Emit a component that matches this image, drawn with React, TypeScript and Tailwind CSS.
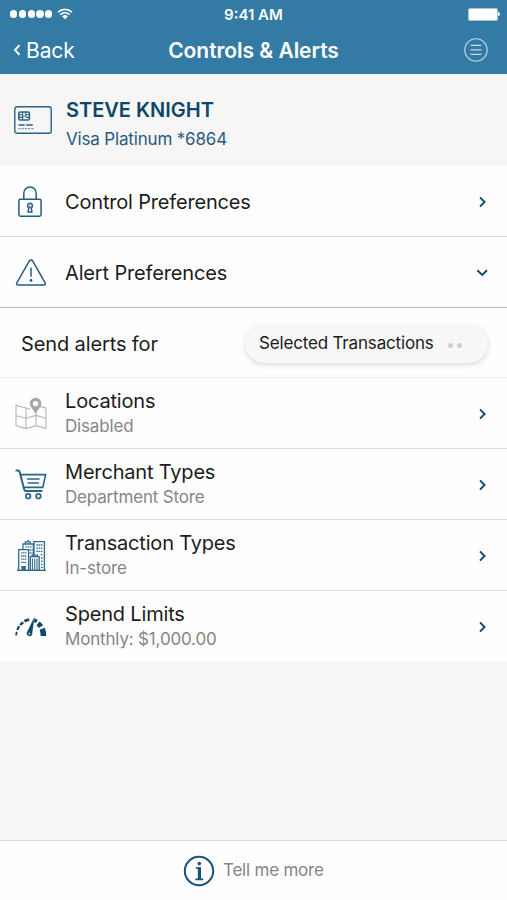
import type { ReactNode } from "react";

type Row = {
  title: string;
  subtitle: string;
  icon: ReactNode;
};

function WifiIcon() {
  return (
    <svg width="16" height="12" viewBox="0 0 16 12" fill="none" stroke="#fff">
      <path d="M1 4.2a10 10 0 0 1 14 0" strokeWidth="1.6" />
      <path d="M3.4 6.6a6.5 6.5 0 0 1 9.2 0" strokeWidth="1.5" />
      <path d="M8 11.2 5.2 8.4a4 4 0 0 1 5.6 0Z" fill="#fff" stroke="none" />
    </svg>
  );
}

function MenuIcon() {
  return (
    <svg width="24" height="24" viewBox="0 0 24 24" fill="none" stroke="#c4dcea">
      <circle cx="12" cy="12" r="11.2" strokeWidth="1.1" />
      <path d="M6.5 7.3h11M6.5 11.8h11M6.5 16.3h11" strokeWidth="1.2" />
    </svg>
  );
}

function CardIcon() {
  return (
    <svg width="38" height="28" viewBox="0 0 38 28" fill="none" stroke="#2b6284">
      <rect x="0.8" y="0.8" width="36.4" height="26.4" rx="2.2" strokeWidth="1.4" />
      <rect x="4.8" y="6" width="10.6" height="8" rx="1.5" strokeWidth="1.6" />
      <path d="M4.8 8.8h3.5M4.8 11.4h3.5M12 8.8h3.3M12 11.4h3.3M8.6 6v8M8.6 10.2h3.2M11.8 6v4.2" strokeWidth="1.1" />
      <path d="M4.5 19h6.2M12.2 19h6.6" strokeWidth="1.5" />
      <path d="M4.5 22.6h15" strokeWidth="1.3" strokeDasharray="2 1.2" opacity=".7" />
    </svg>
  );
}

function LockIcon() {
  return (
    <svg width="24" height="32" viewBox="0 0 24 32" fill="none" stroke="#225c80" strokeWidth="1.5">
      <rect x="0.9" y="13.2" width="22.2" height="17" rx="1.6" />
      <path d="M5.8 13V7.2a6.2 6.2 0 0 1 12.4 0V13" />
      <path d="M12 17.2a2.5 2.5 0 0 1 1.3 4.6l.6 4.2h-3.8l.6-4.2a2.5 2.5 0 0 1 1.3-4.6Z" />
      <path d="M12 19.5v3" strokeWidth="1.2" />
    </svg>
  );
}

function WarningIcon() {
  return (
    <svg width="32" height="28" viewBox="0 0 32 28" fill="none" stroke="#225c80">
      <path
        d="M14.4 2a1.8 1.8 0 0 1 3.2 0l12.6 21.8a1.5 1.5 0 0 1-1.3 2.3H3.1a1.5 1.5 0 0 1-1.3-2.3Z"
        strokeWidth="1.5"
      />
      <path d="M16 8.6v9.2" strokeWidth="1.5" />
      <circle cx="16" cy="21.4" r="1.4" fill="#225c80" stroke="none" />
    </svg>
  );
}

function MapIcon() {
  return (
    <svg width="32" height="33" viewBox="0 0 32 33" fill="none" stroke="#b5b5b5" strokeWidth="1.1">
      <path d="M15.5 12.2 11 11 1 8.2v20.4l10 3 10-3 10 3V11.2l-6-1.8M11 11v20.6M21 16v12.6" />
      <path d="M1 18.8l10 2.4 10-2.8 10 2.8" />
      <path
        d="M20.6 1.4a5.2 5.2 0 0 1 5.2 5.2c0 3.2-3.4 5.2-5.2 9-1.8-3.8-5.2-5.8-5.2-9a5.2 5.2 0 0 1 5.2-5.2Z"
        fill="#a9a9a9"
        stroke="#a2a2a2"
        strokeWidth="1.2"
      />
      <circle cx="20.6" cy="6.6" r="2.7" fill="#fefefe" stroke="none" />
    </svg>
  );
}

function CartIcon() {
  return (
    <svg width="32" height="31" viewBox="0 0 32 31" fill="none" stroke="#286588">
      <path d="M0.6 1.6h2.5c1 0 1.4.6 1.7 1.6l4.4 17.3c.3 1.2.7 1.6 1.8 1.6h16.4" strokeWidth="2" />
      <path d="M6 5.6h24.6l-2.8 12.8H9" strokeWidth="1.6" />
      <path d="M12 10h12.6M12.6 14h11.4" strokeWidth="1.6" />
      <circle cx="13.2" cy="27.2" r="2.3" strokeWidth="1.7" />
      <circle cx="23.4" cy="27.2" r="2.3" strokeWidth="1.7" />
    </svg>
  );
}

function BuildingsIcon() {
  return (
    <svg width="29" height="31" viewBox="0 0 29 31" fill="none" stroke="#326b8c" strokeWidth="1.3">
      <path d="M0 30.3h29" strokeWidth="1.4" />
      <path d="M1.7 30V9.7h9.9V30" />
      <path d="M6 9.5V4h10.4v12M8.3 3.8V1.9h5v1.9M11.2 0v2" />
      <path d="M17 15V1.6h10.4V30" />
      <path d="M13.3 30V16.6h8.9V30M15 16.4v-1.2h5.5v1.2" />
      <path d="M4.1 12.8h5.2M4.1 16h5.2M4.1 19.2h5.2M4.1 22.4h5.2" strokeDasharray="1.5 .5" />
      <path
        d="M19.4 5h6.2M19.4 8.2h6.2M19.4 11.4h6.2M23.7 14.6h2M24 18h1.8M24 21.2h1.8M24 24.4h1.8M24 27.4h1.8"
        strokeDasharray="1.6 .6"
      />
      <path d="M8.5 6.8H15M12.5 10h3M12.5 13h3" strokeDasharray="1.4 .6" />
      <path d="M15.4 18.6V30M17.7 18.6V30M20 18.6V30" strokeWidth="1.1" />
      <path d="M5 30v-3.4h3.2V30" fill="#326b8c" />
    </svg>
  );
}

function GaugeIcon() {
  return (
    <svg width="32" height="21" viewBox="0 0 32 21" fill="none" stroke="#0f4868">
      <path d="M1.2 19.6q0-2 .6-3.8" strokeWidth="1.8" />
      <path d="M2.3 14q.7-2 2-3.8" strokeWidth="2.1" />
      <path d="M5.2 9q1.3-1.6 3-2.8" strokeWidth="2.5" />
      <path d="M9.4 5.2q2-1.1 4.8-1.5" strokeWidth="2.8" />
      <path d="M18.6 4.2q1.8.4 3.2 1.3" strokeWidth="3.8" />
      <path d="M23 7.4q1.8 1.4 3 3.3" strokeWidth="5" />
      <path d="M27.2 12.8q1.2 3 1.2 7.2" strokeWidth="5.6" />
      <path d="m19.7 0-8 16.4a3 3 0 0 0 5.5 2.3Z" fill="#0f4868" stroke="#fefefe" strokeWidth=".3" />
      <circle cx="14.4" cy="17.6" r=".9" fill="#fefefe" stroke="none" />
    </svg>
  );
}

function InfoIcon() {
  return (
    <svg width="32" height="32" viewBox="0 0 32 32" fill="none" stroke="#17547a">
      <circle cx="16" cy="16" r="14.2" strokeWidth="2" />
      <circle cx="16.3" cy="8.6" r="1.8" fill="#17547a" stroke="none" />
      <path d="M12.7 13h4.8M12.4 24.4h7.8" strokeWidth="1.6" />
      <path d="M16.4 12.2v12.2" strokeWidth="3.2" />
    </svg>
  );
}

function Chevron({ down = false }: { down?: boolean }) {
  return (
    <svg width="12" height="12" viewBox="0 0 12 12" fill="none" stroke="#0f486e" strokeWidth="1.9" className="shrink-0">
      <path d={down ? "m1.3 3.2 4.9 4.7L11 3.2" : "m4 1.3 4.6 4.7L4 10.7"} />
    </svg>
  );
}

const rows: Row[] = [
  { title: "Locations", subtitle: "Disabled", icon: <MapIcon /> },
  { title: "Merchant Types", subtitle: "Department Store", icon: <CartIcon /> },
  { title: "Transaction Types", subtitle: "In-store", icon: <BuildingsIcon /> },
  { title: "Spend Limits", subtitle: "Monthly: $1,000.00", icon: <GaugeIcon /> },
];

export default function App() {
  return (
    <div className="flex h-[900px] w-[507px] flex-col overflow-hidden bg-[#f6f6f6] font-['Inter',sans-serif] text-[#1c1c1c]">
      <header className="h-[74px] shrink-0 bg-[#337ba5] text-white">
        <div className="grid h-7 grid-cols-3 items-center px-[7px]">
          <div className="flex items-center gap-[5px] pl-[3px]">
            <div className="flex gap-[1.5px]">
              {[0, 1, 2, 3, 4].map((dot) => (
                <span key={dot} className="size-[7.3px] rounded-full bg-white" />
              ))}
            </div>
            <WifiIcon />
          </div>
          <p className="pt-px text-center text-[15px] leading-5 font-semibold">9:41 AM</p>
          <div className="flex items-center justify-end">
            <span className="h-[13px] w-[30px] rounded-[2px] border border-[#a5c8dc] bg-white" />
            <span className="h-1 w-[2px] rounded-r-full bg-white" />
          </div>
        </div>
        <div className="grid h-11 grid-cols-[1fr_auto_1fr] items-center px-[13px]">
          <div className="flex items-center gap-[5px]">
            <svg width="8" height="12" viewBox="0 0 8 12" fill="none" stroke="#fff" strokeWidth="1.9">
              <path d="M6.5 1.2 2 6l4.5 4.8" />
            </svg>
            <span className="pt-[2px] text-[21px] leading-7 tracking-[-0.1px]">Back</span>
          </div>
          <h1 className="pt-[2px] text-[21px] leading-7 font-semibold tracking-[-0.04px]">Controls &amp; Alerts</h1>
          <div className="flex justify-end pr-[6px]">
            <MenuIcon />
          </div>
        </div>
      </header>

      <section className="flex h-[92px] shrink-0 items-center pl-[14px] text-[#0e466a]">
        <CardIcon />
        <div className="pt-[7px] pl-[14px]">
          <p className="text-xl leading-7 font-semibold">STEVE KNIGHT</p>
          <p className="pt-[3px] text-[17px] leading-6 tracking-[-0.17px] text-[#2a5b7c]">Visa Platinum *6864</p>
        </div>
      </section>

      <main className="shrink-0 bg-[#fefefe]">
        <div className="flex h-[71px] items-center border-b border-[#d9d9d9] pt-[2px] pr-[19px]">
          <div className="flex w-[65px] pl-[18px]">
            <LockIcon />
          </div>
          <p className="flex-1 text-xl tracking-[-0.18px]">Control Preferences</p>
          <Chevron />
        </div>
        <div className="flex h-[71px] items-center border-b border-[#bdbdbd] pt-[2px] pr-[19px]">
          <div className="flex w-[65px] pl-[15px]">
            <WarningIcon />
          </div>
          <p className="flex-1 text-xl tracking-[-0.15px]">Alert Preferences</p>
          <Chevron down />
        </div>
        <div className="flex h-[70px] items-center justify-between border-b border-[#f1f1f1] pt-[2px] pr-[19px] pl-[21px]">
          <p className="text-xl tracking-[-0.12px]">Send alerts for</p>
          <div className="flex h-[39px] w-[243px] items-center rounded-full bg-[#f7f7f7] pl-[14px] shadow-[0_2px_5px_rgba(0,0,0,0.15)]">
            <span className="pt-px text-[17px] tracking-[-0.17px]">Selected Transactions</span>
            <span className="flex gap-1 pt-[3px] pl-[14px]">
              <i className="size-[5px] rounded-full bg-[#cfcfcf]" />
              <i className="size-[5px] rounded-full bg-[#cfcfcf]" />
            </span>
          </div>
        </div>
        <ul>
          {rows.map((row) => (
            <li
              key={row.title}
              className="flex h-[71px] items-center border-b border-[#dddddd] pr-[19px] last:border-transparent"
            >
              <div className="flex w-[65px] justify-center pt-px pr-[3px]">{row.icon}</div>
              <div className="flex-1">
                <p className="text-xl leading-6 tracking-[-0.18px]">{row.title}</p>
                <p className="-mb-px pt-px text-[17px] leading-6 tracking-[-0.17px] text-[#858585]">{row.subtitle}</p>
              </div>
              <div className="pt-[2px]">
                <Chevron />
              </div>
            </li>
          ))}
        </ul>
      </main>

      <footer className="mt-auto flex h-[60px] shrink-0 items-center border-t border-[#d9d9d9] bg-[#fefefe] pl-[183px]">
        <InfoIcon />
        <p className="pt-px pl-2 text-[17px] tracking-[-0.22px] text-[#858585]">Tell me more</p>
      </footer>
    </div>
  );
}
